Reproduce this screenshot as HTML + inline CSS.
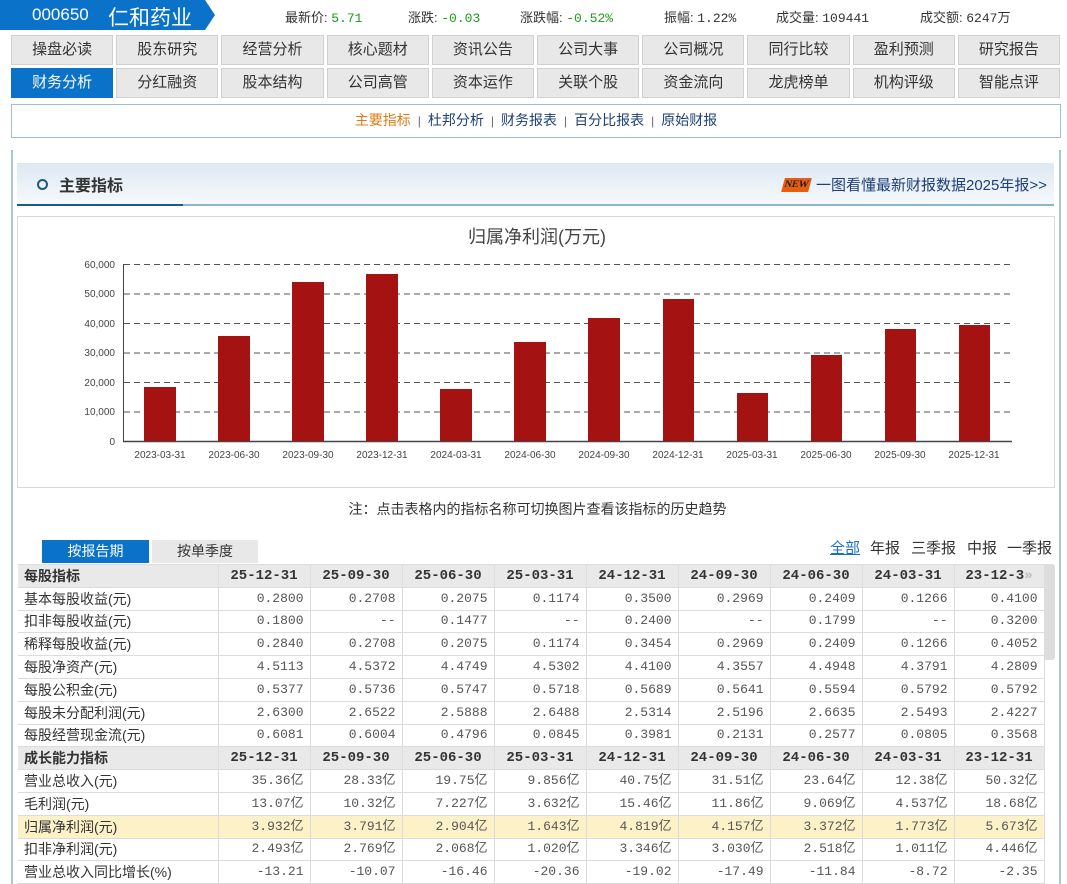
<!DOCTYPE html>
<html><head><meta charset="utf-8">
<style>
*{margin:0;padding:0;box-sizing:border-box}
body{width:1067px;height:884px;overflow:hidden;background:#fff;font-family:"Liberation Sans","Noto Sans CJK SC",sans-serif;font-size:14px;color:#333;position:relative}
.abs{position:absolute}
.top{left:0;top:0;width:1067px;height:31px}
.stat{position:absolute;top:7px;font-size:13px;color:#333;white-space:nowrap}
.stat b{font-weight:normal;font-family:"Liberation Mono","Noto Sans CJK SC",monospace}
.g{color:#1d9a1d}
.nav{left:11px;width:1049px;display:flex;gap:3px}
.nav div{flex:1;height:30px;background:#e8e8e8;border:1px solid #d0d0d0;text-align:center;line-height:28px;font-size:15px;color:#333}
.nav div.on{background:#0a72c9;color:#fff;border-color:#0a72c9}
.sub{left:11px;top:104px;width:1050px;height:34px;border:1px solid #9cc0cf;text-align:center;line-height:31px;font-size:14px;color:#1e3f78}
.sub .o{color:#e07a10}
.sub i{font-style:normal;color:#666;margin:0 7px;font-size:12px}
table{border-collapse:collapse;position:absolute;left:18px;top:564px;width:1026px;table-layout:fixed}
td{height:22.8px;line-height:20px;border:1px solid #dcdcdc;font-family:"Liberation Mono","Noto Sans CJK SC",monospace;font-size:13px;color:#555;text-align:right;padding:0 6px 0 0;white-space:nowrap;overflow:hidden}
td:first-child{font-family:"Liberation Sans","Noto Sans CJK SC",sans-serif;font-size:14px;text-align:left;padding-left:6px;color:#333;border-left:none}
tr.h td{background:#e9e9e9;font-weight:bold;color:#333;font-size:14px;text-align:center;padding-right:0}
tr.h td:first-child{text-align:left}
tr.y td{background:#fdf1c8}
.flt span{position:absolute;top:0;font-size:15px;color:#333;white-space:nowrap}
</style></head><body>
<div class="abs top">
<svg width="215" height="31" class="abs" style="left:0;top:0"><polygon points="0,0 205,0 215,15 205,30 0,30" fill="#0a72c9"/></svg>
<div class="abs" style="left:32px;top:5px;color:#fff;font-size:17px">000650</div>
<div class="abs" style="left:108px;top:2px;color:#fff;font-size:21px">仁和药业</div>
<div class="stat" style="left:285px">最新价: <b class="g">5.71</b></div>
<div class="stat" style="left:408px">涨跌: <b class="g">-0.03</b></div>
<div class="stat" style="left:520px">涨跌幅: <b class="g">-0.52%</b></div>
<div class="stat" style="left:664px">振幅: <b>1.22%</b></div>
<div class="stat" style="left:776px">成交量: <b>109441</b></div>
<div class="stat" style="left:920px">成交额: <b>6247</b>万</div>
</div>
<div class="abs nav" style="top:35px"><div>操盘必读</div><div>股东研究</div><div>经营分析</div><div>核心题材</div><div>资讯公告</div><div>公司大事</div><div>公司概况</div><div>同行比较</div><div>盈利预测</div><div>研究报告</div></div>
<div class="abs nav" style="top:68px"><div class="on">财务分析</div><div>分红融资</div><div>股本结构</div><div>公司高管</div><div>资本运作</div><div>关联个股</div><div>资金流向</div><div>龙虎榜单</div><div>机构评级</div><div>智能点评</div></div>
<div class="abs sub"><span class="o">主要指标</span><i>|</i>杜邦分析<i>|</i>财务报表<i>|</i>百分比报表<i>|</i>原始财报</div>
<div class="abs" style="left:11px;top:150px;width:2px;height:734px;background:#a9c8d6"></div>
<div class="abs" style="left:1059px;top:150px;width:2px;height:734px;background:#a9c8d6"></div>
<div class="abs" style="left:17px;top:163px;width:1037px;height:43px;background:linear-gradient(#dde8f3,#f7fafd)"></div>
<div class="abs" style="left:17px;top:204px;width:1037px;height:2px;background:#8fb7cc"></div>
<div class="abs" style="left:17px;top:204px;width:166px;height:2px;background:#1e5a80"></div>
<div class="abs" style="left:37px;top:179px;width:11px;height:11px;border:2px solid #1e5a80;border-radius:50%"></div>
<div class="abs" style="left:59px;top:172px;font-size:16px;font-weight:bold;color:#333">主要指标</div>
<div class="abs" style="left:783px;top:178px;width:27px;height:14px;background:#e85d10;transform:skewX(-15deg);color:#222;font-size:10px;font-family:'Liberation Serif',serif;font-weight:bold;text-align:center;line-height:14px">NEW</div>
<div class="abs" style="left:816px;top:174px;font-size:15px;color:#1e3f78">一图看懂最新财报数据2025年报&gt;&gt;</div>
<div class="abs" style="left:17px;top:216px;width:1038px;height:272px;border:1px solid #d8d8d8"></div>
<svg class="abs" style="left:0;top:0" width="1067" height="500">
<text x="537" y="243" font-size="18" fill="#444" text-anchor="middle" font-family="Liberation Sans,Noto Sans CJK SC,sans-serif">归属净利润(万元)</text>
<g stroke="#555" stroke-dasharray="6,4" stroke-width="1">
<line x1="124" y1="264.5" x2="1012" y2="264.5"/><line x1="124" y1="294" x2="1012" y2="294"/><line x1="124" y1="323.5" x2="1012" y2="323.5"/><line x1="124" y1="353" x2="1012" y2="353"/><line x1="124" y1="382.5" x2="1012" y2="382.5"/><line x1="124" y1="412" x2="1012" y2="412"/></g>
<line x1="123.5" y1="264" x2="123.5" y2="442" stroke="#444"/>
<line x1="123" y1="441.5" x2="1012" y2="441.5" stroke="#444" stroke-width="1.5"/>
<g font-size="10" fill="#444" text-anchor="end" font-family="Liberation Sans,sans-serif">
<text x="115" y="268">60,000</text><text x="115" y="297">50,000</text><text x="115" y="327">40,000</text><text x="115" y="356">30,000</text><text x="115" y="386">20,000</text><text x="115" y="415">10,000</text><text x="115" y="445">0</text></g>
<g fill="#a51212">
<rect x="144" y="387" width="32" height="54"/><rect x="218" y="336" width="32" height="105"/><rect x="292" y="282" width="32" height="159"/><rect x="366" y="274" width="32" height="167"/><rect x="440" y="389" width="32" height="52"/><rect x="514" y="342" width="32" height="99"/><rect x="588" y="318" width="32" height="123"/><rect x="663" y="299" width="31" height="142"/><rect x="737" y="393" width="31" height="48"/><rect x="811" y="355" width="31" height="86"/><rect x="885" y="329" width="31" height="112"/><rect x="959" y="325" width="31" height="116"/></g>
<g font-size="10" fill="#444" text-anchor="middle" font-family="Liberation Sans,sans-serif">
<text x="160" y="458">2023-03-31</text><text x="234" y="458">2023-06-30</text><text x="308" y="458">2023-09-30</text><text x="382" y="458">2023-12-31</text><text x="456" y="458">2024-03-31</text><text x="530" y="458">2024-06-30</text><text x="604" y="458">2024-09-30</text><text x="678" y="458">2024-12-31</text><text x="752" y="458">2025-03-31</text><text x="826" y="458">2025-06-30</text><text x="900" y="458">2025-09-30</text><text x="974" y="458">2025-12-31</text></g>
</svg>
<div class="abs" style="left:0;width:1075px;top:499px;text-align:center;font-size:14px;color:#333">注：点击表格内的指标名称可切换图片查看该指标的历史趋势</div>
<div class="abs" style="left:42px;top:540px;width:107px;height:23px;background:#0a72c9;color:#fff;text-align:center;line-height:23px;font-size:14px">按报告期</div>
<div class="abs" style="left:152px;top:540px;width:106px;height:23px;background:#e8e8e8;color:#333;text-align:center;line-height:23px;font-size:14px">按单季度</div>
<div class="abs flt" style="left:0;top:537px;width:1067px;height:20px"><span style="left:830px;color:#1a6ec8;text-decoration:underline">全部</span><span style="left:870px">年报</span><span style="left:911px">三季报</span><span style="left:967px">中报</span><span style="left:1007px">一季报</span></div>
<div class="abs" style="left:1044px;top:564px;width:11px;height:96px;background:#ddd;border-radius:3px"></div>
<table>
<colgroup><col style="width:200px"><col style="width:92px"><col style="width:92px"><col style="width:92px"><col style="width:92px"><col style="width:92px"><col style="width:92px"><col style="width:92px"><col style="width:92px"><col style="width:90px"></colgroup>
<tr class="h"><td>每股指标</td><td>25-12-31</td><td>25-09-30</td><td>25-06-30</td><td>25-03-31</td><td>24-12-31</td><td>24-09-30</td><td>24-06-30</td><td>24-03-31</td><td>23-12-3<span style="color:#bbb">»</span></td></tr>
<tr><td>基本每股收益(元)</td><td>0.2800</td><td>0.2708</td><td>0.2075</td><td>0.1174</td><td>0.3500</td><td>0.2969</td><td>0.2409</td><td>0.1266</td><td>0.4100</td></tr>
<tr><td>扣非每股收益(元)</td><td>0.1800</td><td>--</td><td>0.1477</td><td>--</td><td>0.2400</td><td>--</td><td>0.1799</td><td>--</td><td>0.3200</td></tr>
<tr><td>稀释每股收益(元)</td><td>0.2840</td><td>0.2708</td><td>0.2075</td><td>0.1174</td><td>0.3454</td><td>0.2969</td><td>0.2409</td><td>0.1266</td><td>0.4052</td></tr>
<tr><td>每股净资产(元)</td><td>4.5113</td><td>4.5372</td><td>4.4749</td><td>4.5302</td><td>4.4100</td><td>4.3557</td><td>4.4948</td><td>4.3791</td><td>4.2809</td></tr>
<tr><td>每股公积金(元)</td><td>0.5377</td><td>0.5736</td><td>0.5747</td><td>0.5718</td><td>0.5689</td><td>0.5641</td><td>0.5594</td><td>0.5792</td><td>0.5792</td></tr>
<tr><td>每股未分配利润(元)</td><td>2.6300</td><td>2.6522</td><td>2.5888</td><td>2.6488</td><td>2.5314</td><td>2.5196</td><td>2.6635</td><td>2.5493</td><td>2.4227</td></tr>
<tr><td>每股经营现金流(元)</td><td>0.6081</td><td>0.6004</td><td>0.4796</td><td>0.0845</td><td>0.3981</td><td>0.2131</td><td>0.2577</td><td>0.0805</td><td>0.3568</td></tr>
<tr class="h"><td>成长能力指标</td><td>25-12-31</td><td>25-09-30</td><td>25-06-30</td><td>25-03-31</td><td>24-12-31</td><td>24-09-30</td><td>24-06-30</td><td>24-03-31</td><td>23-12-31</td></tr>
<tr><td>营业总收入(元)</td><td>35.36亿</td><td>28.33亿</td><td>19.75亿</td><td>9.856亿</td><td>40.75亿</td><td>31.51亿</td><td>23.64亿</td><td>12.38亿</td><td>50.32亿</td></tr>
<tr><td>毛利润(元)</td><td>13.07亿</td><td>10.32亿</td><td>7.227亿</td><td>3.632亿</td><td>15.46亿</td><td>11.86亿</td><td>9.069亿</td><td>4.537亿</td><td>18.68亿</td></tr>
<tr class="y"><td>归属净利润(元)</td><td>3.932亿</td><td>3.791亿</td><td>2.904亿</td><td>1.643亿</td><td>4.819亿</td><td>4.157亿</td><td>3.372亿</td><td>1.773亿</td><td>5.673亿</td></tr>
<tr><td>扣非净利润(元)</td><td>2.493亿</td><td>2.769亿</td><td>2.068亿</td><td>1.020亿</td><td>3.346亿</td><td>3.030亿</td><td>2.518亿</td><td>1.011亿</td><td>4.446亿</td></tr>
<tr><td>营业总收入同比增长(%)</td><td>-13.21</td><td>-10.07</td><td>-16.46</td><td>-20.36</td><td>-19.02</td><td>-17.49</td><td>-11.84</td><td>-8.72</td><td>-2.35</td></tr>
</table>
</body></html>
